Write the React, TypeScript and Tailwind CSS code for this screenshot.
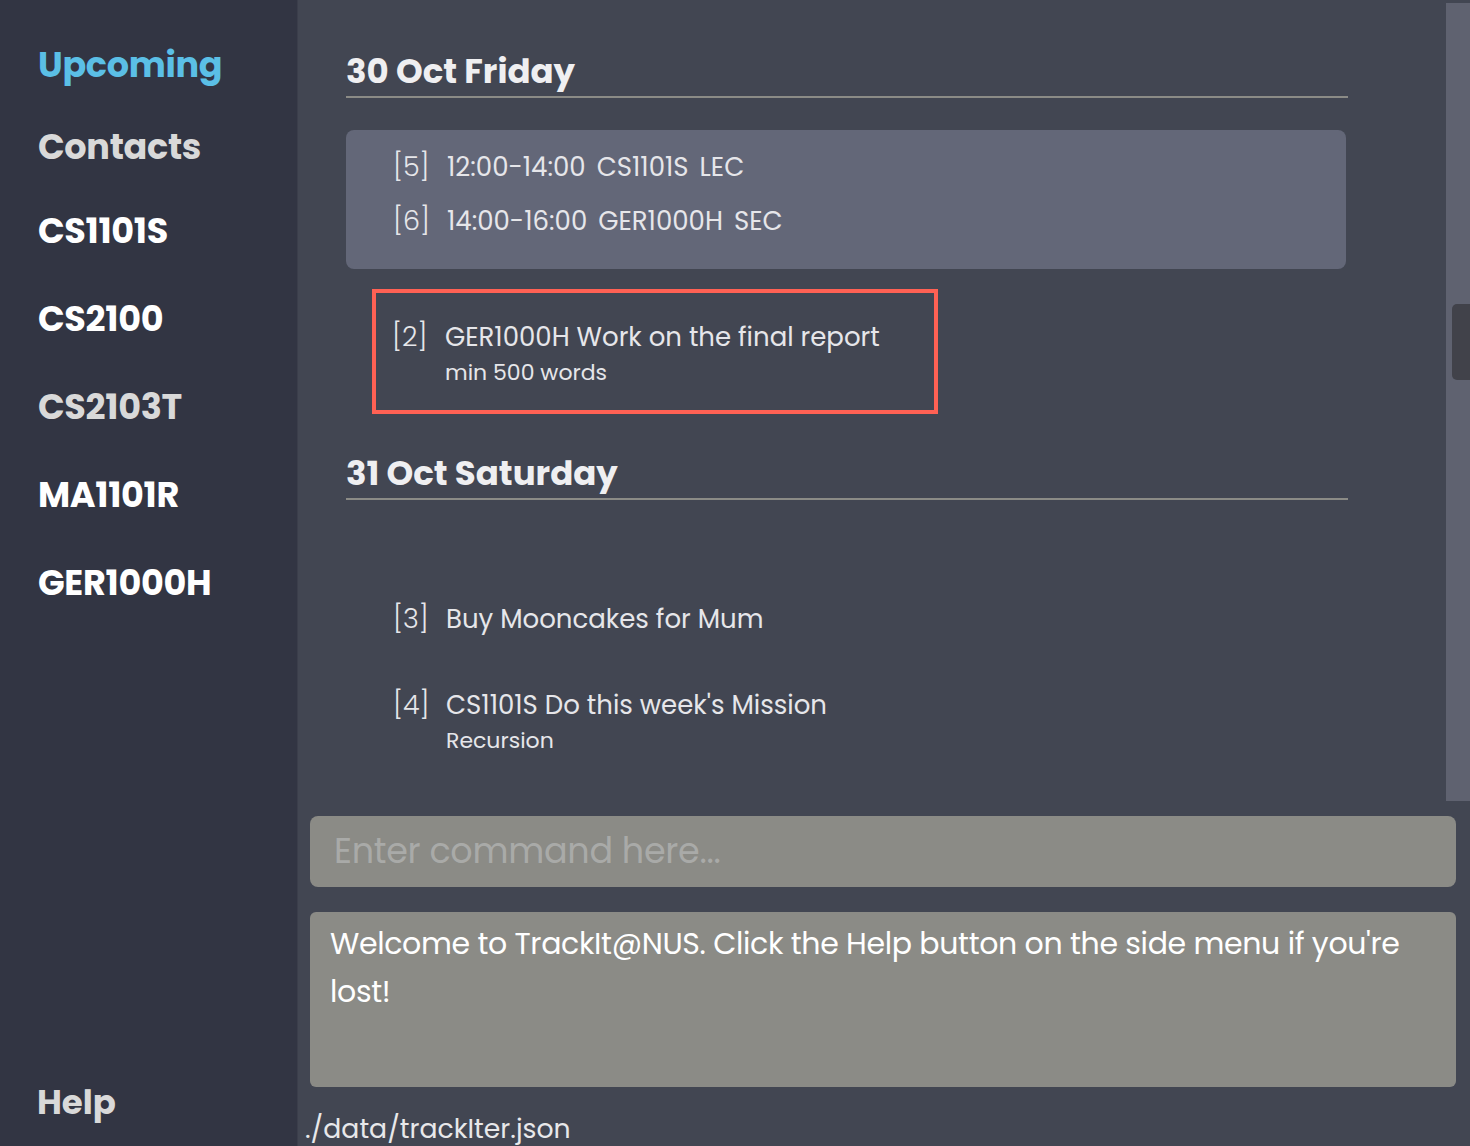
import React from "react";

const font = { fontFamily: "Poppins, Inter, 'Noto Sans', sans-serif" };

const navItems = [
  { label: "Upcoming", color: "text-[#5bbfe6]", h: "h-[82px]" },
  { label: "Contacts", color: "text-[#d9d9d9]", h: "h-[84px]" },
  { label: "CS1101S", color: "text-white", h: "h-[88px]" },
  { label: "CS2100", color: "text-white", h: "h-[88px]" },
  { label: "CS2103T", color: "text-[#d9d9d9]", h: "h-[88px]" },
  { label: "MA1101R", color: "text-white", h: "h-[88px]" },
  { label: "GER1000H", color: "text-white", h: "h-[88px]" },
];

function DayHeader({ title }: { title: string }) {
  return (
    <div className="border-b-2 border-[#8b8b86]">
      <h2 className="text-[34px] font-bold leading-[50px] text-[#efeff1]">{title}</h2>
    </div>
  );
}

function Task({ idx, title, sub }: { idx: number; title: string; sub?: string }) {
  return (
    <div className="flex items-start text-[#e6e6ea]">
      <span className="w-[53px] text-[27px] leading-[36px] font-light">[{idx}]</span>
      <div className="flex flex-col">
        <span className="text-[26px] leading-[36px]">{title}</span>
        {sub && <span className="text-[22px] leading-[36px]">{sub}</span>}
      </div>
    </div>
  );
}

function Lesson({ idx, parts }: { idx: number; parts: string[] }) {
  return (
    <div className="flex">
      <span className="w-[54px] text-[27px] font-light">[{idx}]</span>
      <div className="flex gap-[11px]">
        {parts.map((p) => (
          <span key={p}>{p}</span>
        ))}
      </div>
    </div>
  );
}

export default function App() {
  return (
    <div style={font} className="flex w-[1470px] h-[1146px] overflow-hidden bg-[#424652]">
      {/* Side menu */}
      <aside className="w-[298px] shrink-0 bg-[#323543] border-r border-[#3b3e4b] flex flex-col justify-between pl-[38px] pt-[40px] pb-[21px]">
        <nav className="flex flex-col">
          {navItems.map((n) => (
            <div key={n.label} className={`${n.h} flex items-start text-[35px] font-bold leading-[50px] tracking-[-0.3px] ${n.color}`}>
              {n.label}
            </div>
          ))}
        </nav>
        <div className="text-[34px] font-bold leading-[46px] text-[#d9d9d9] -ml-[1px]">Help</div>
      </aside>

      {/* Main */}
      <main className="flex-1 flex flex-col">
        <div className="h-[801px] shrink-0 flex">
          <div className="flex-1 pl-[48px] pr-[98px] pt-[46px] flex flex-col">
            <DayHeader title="30 Oct Friday" />
            <div className="mt-[32px] mr-[2px] h-[139px] bg-[#636778] rounded-[8px] pl-[47px] pt-[19px] flex flex-col gap-[18px] text-[#e6e6ea] text-[26px] leading-[36px]">
              <Lesson idx={5} parts={["12:00-14:00", "CS1101S", "LEC"]} />
              <Lesson idx={6} parts={["14:00-16:00", "GER1000H", "SEC"]} />
            </div>
            <div className="mt-[20px] ml-[26px] w-[566px] h-[125px] border-[4px] border-[#ff6154] pl-[16px] pt-[26px]">
              <Task idx={2} title="GER1000H Work on the final report" sub="min 500 words" />
            </div>
            <div className="mt-[34px]">
              <DayHeader title="31 Oct Saturday" />
            </div>
            <div className="pl-[47px] pt-[101px] flex flex-col gap-[50px]">
              <Task idx={3} title="Buy Mooncakes for Mum" />
              <Task idx={4} title="CS1101S Do this week's Mission" sub="Recursion" />
            </div>
          </div>
          {/* Scrollbar */}
          <div className="w-[24px] mt-[3px] bg-[#5f6270] flex flex-col items-end pt-[301px]">
            <div className="w-[18px] h-[76px] bg-[#41424a] rounded-l-[5px]" />
          </div>
        </div>

        <div className="pl-[12px] pr-[14px] pt-[15px] flex flex-col shrink-0">
          <div className="h-[71px] bg-[#8b8b86] rounded-[8px] flex items-center pl-[24px]">
            <span className="text-[35px] text-[#a9aaa8] tracking-[-0.3px]">Enter command here...</span>
          </div>
          <div className="mt-[25px] h-[175px] bg-[#8b8b86] rounded-[6px] px-[20px] pt-[8px]">
            <p className="text-[30px] leading-[48px] text-white tracking-[-0.35px]">
              Welcome to TrackIt@NUS. Click the Help button on the side menu if you're lost!
            </p>
          </div>
        </div>
        <div className="pl-[7px] mt-[25px] text-[26.7px] leading-[34px] text-[#e8e8ea] shrink-0">./data/trackIter.json</div>
      </main>
    </div>
  );
}
